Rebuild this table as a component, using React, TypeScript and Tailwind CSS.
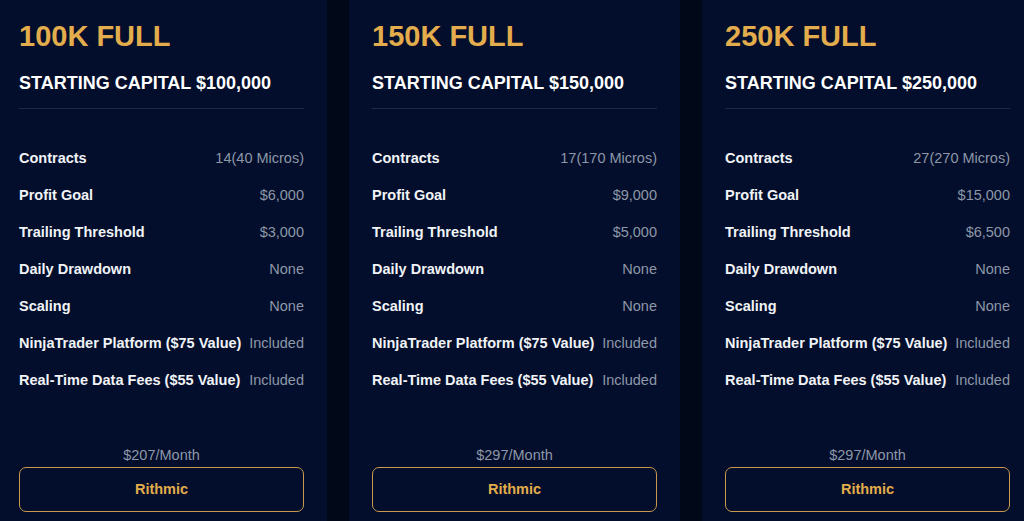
import React from "react";

type Plan = {
  title: string;
  capital: string;
  rows: [string, string][];
  price: string;
};

const plans: Plan[] = [
  {
    title: "100K FULL",
    capital: "STARTING CAPITAL $100,000",
    rows: [
      ["Contracts", "14(40 Micros)"],
      ["Profit Goal", "$6,000"],
      ["Trailing Threshold", "$3,000"],
      ["Daily Drawdown", "None"],
      ["Scaling", "None"],
      ["NinjaTrader Platform ($75 Value)", "Included"],
      ["Real-Time Data Fees ($55 Value)", "Included"],
    ],
    price: "$207/Month",
  },
  {
    title: "150K FULL",
    capital: "STARTING CAPITAL $150,000",
    rows: [
      ["Contracts", "17(170 Micros)"],
      ["Profit Goal", "$9,000"],
      ["Trailing Threshold", "$5,000"],
      ["Daily Drawdown", "None"],
      ["Scaling", "None"],
      ["NinjaTrader Platform ($75 Value)", "Included"],
      ["Real-Time Data Fees ($55 Value)", "Included"],
    ],
    price: "$297/Month",
  },
  {
    title: "250K FULL",
    capital: "STARTING CAPITAL $250,000",
    rows: [
      ["Contracts", "27(270 Micros)"],
      ["Profit Goal", "$15,000"],
      ["Trailing Threshold", "$6,500"],
      ["Daily Drawdown", "None"],
      ["Scaling", "None"],
      ["NinjaTrader Platform ($75 Value)", "Included"],
      ["Real-Time Data Fees ($55 Value)", "Included"],
    ],
    price: "$297/Month",
  },
];

function Card({ plan }: { plan: Plan }) {
  return (
    <div className="w-[331px] shrink-0 h-[540px] bg-[#020e2b] px-[23px] pt-[18px] flex flex-col">
      <h2 className="text-[29px] leading-[36px] font-bold text-[#e3ac4c]">
        {plan.title}
      </h2>
      <h3 className="mt-[17px] text-[18px] leading-[24px] font-bold text-white">
        {plan.capital}
      </h3>
      <div className="mt-[13px] h-px bg-[#1e2a42]" />
      <div className="mt-[39px] flex flex-col gap-[17px]">
        {plan.rows.map(([label, value]) => (
          <div key={label} className="flex justify-between items-center text-[14.5px] leading-[20px]">
            <span className="font-bold text-[#f1f3f7]">{label}</span>
            <span className="text-[#8e97a8]">{value}</span>
          </div>
        ))}
      </div>
      <div className="mt-[55px] text-center text-[14.5px] leading-[20px] text-[#8e97a8]">
        {plan.price}
      </div>
      <button className="mt-[2px] h-[45px] w-full rounded-[7px] border border-[#c99a4c] text-[14.5px] font-bold text-[#e3ac4c]">
        Rithmic
      </button>
    </div>
  );
}

export default function App() {
  return (
    <div
      className="w-[1024px] h-[521px] overflow-hidden bg-[#010817]"
      style={{ fontFamily: '"Liberation Sans", Arial, sans-serif' }}
    >
      <div className="flex gap-[22px] ml-[-4px]">
        {plans.map((p) => (
          <Card key={p.title} plan={p} />
        ))}
      </div>
    </div>
  );
}
